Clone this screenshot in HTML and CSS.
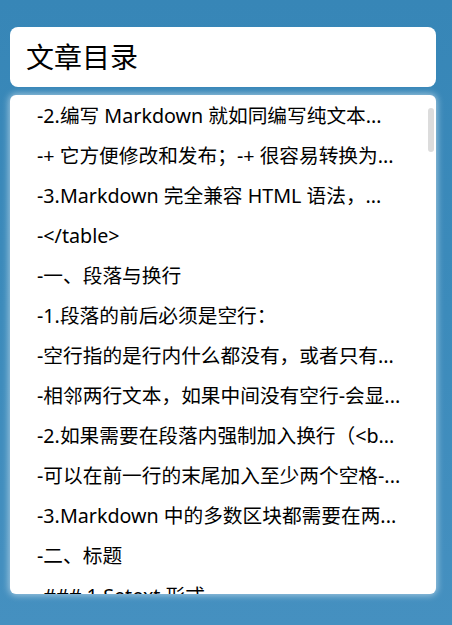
FILE: index.html
```html
<!DOCTYPE html>
<html lang="zh-CN">
<head>
<meta charset="utf-8">
<title>文章目录</title>
<link rel="stylesheet" href="styles.css">
</head>
<body>
<div class="page">
  <header class="title-card">
    <h1 class="title">文章目录</h1>
  </header>
  <nav class="toc">
    <ul class="toc-list">
      <li class="toc-item">-2.编写 Markdown 就如同编写纯文本...</li>
      <li class="toc-item">-+ 它方便修改和发布；-+ 很容易转换为...</li>
      <li class="toc-item">-3.Markdown 完全兼容 HTML 语法，...</li>
      <li class="toc-item">-&lt;/table&gt;</li>
      <li class="toc-item">-一、段落与换行</li>
      <li class="toc-item">-1.段落的前后必须是空行：</li>
      <li class="toc-item">-空行指的是行内什么都没有，或者只有...</li>
      <li class="toc-item">-相邻两行文本，如果中间没有空行-会显...</li>
      <li class="toc-item">-2.如果需要在段落内强制加入换行（&lt;b...</li>
      <li class="toc-item">-可以在前一行的末尾加入至少两个空格-...</li>
      <li class="toc-item">-3.Markdown 中的多数区块都需要在两...</li>
      <li class="toc-item">-二、标题</li>
      <li class="toc-item">-### 1.Setext 形式</li>
    </ul>
    <div class="scroll-thumb"></div>
  </nav>
</div>
</body>
</html>
```
FILE: styles.css
```css
html, body {
  margin: 0;
  padding: 0;
  height: 100%;
}
body {
  background: linear-gradient(180deg, #3786b7 0%, #3c8bbb 50%, #4590c0 100%);
  font-family: "Noto Sans", "Noto Sans CJK SC", sans-serif;
  color: #000;
}
.page {
  display: flex;
  flex-direction: column;
  gap: 8px;
  padding: 27px 16px 0 10px;
}
.title-card {
  background: #fff;
  border-radius: 8px;
  height: 60px;
  display: flex;
  align-items: center;
  padding-left: 16px;
}
.title {
  margin: 0;
  font-size: 28px;
  font-weight: 400;
  line-height: 1;
  color: #000;
}
.toc {
  position: relative;
  background: #fff;
  border-radius: 6px;
  height: 499px;
  overflow: hidden;
  box-shadow: 0 0 7px 1px rgba(255, 255, 255, 0.55);
}
.toc-list {
  list-style: none;
  margin: 0;
  padding: 1px 16px 0 27px;
}
.toc-item {
  height: 40px;
  line-height: 40px;
  font-size: 19.7px;
  white-space: nowrap;
  overflow: hidden;
  text-overflow: ellipsis;
}
.scroll-thumb {
  position: absolute;
  top: 13px;
  right: 2px;
  width: 6px;
  height: 44px;
  border-radius: 3px;
  background: #dcdcdc;
}
```
